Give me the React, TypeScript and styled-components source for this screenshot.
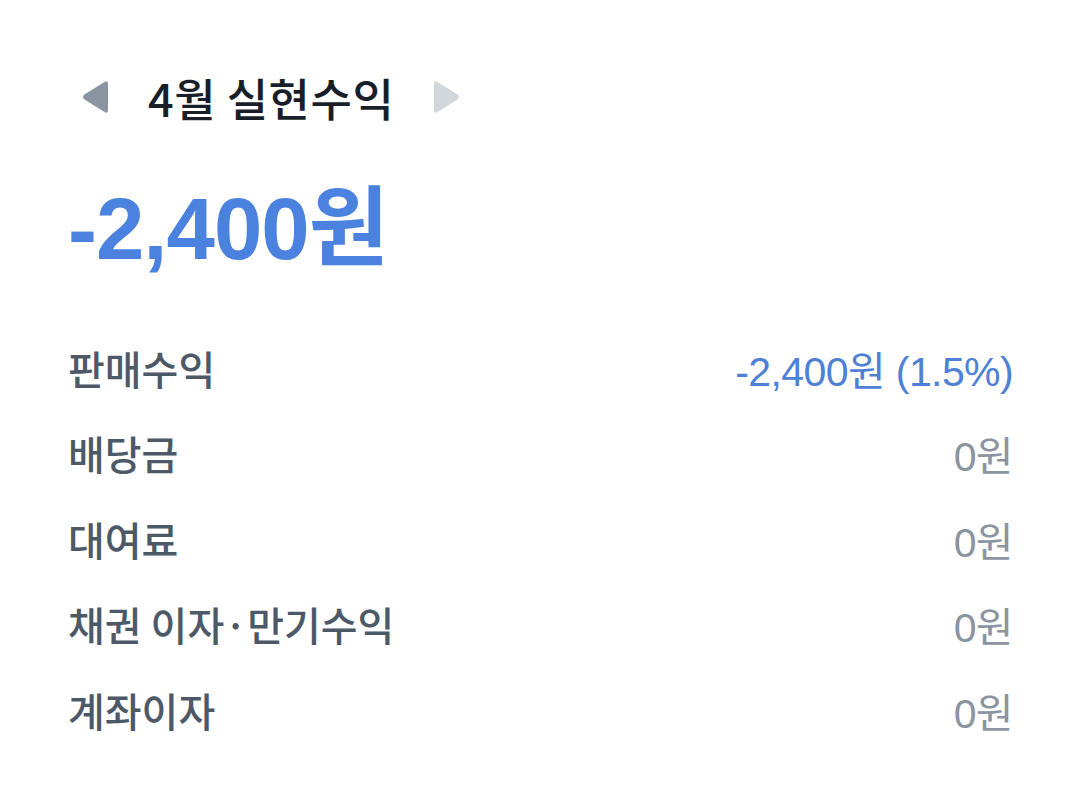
import React from 'react';
import styled, { createGlobalStyle } from 'styled-components';

const GlobalStyle = createGlobalStyle`
  body {
    margin: 0;
    background: #ffffff;
    font-family: "Liberation Sans", "Noto Sans CJK KR", sans-serif;
  }
`

const Page = styled.div`
  width: 1079px;
  height: 800px;
  box-sizing: border-box;
  padding: 62px 66px 0 68px;
  display: flex;
  flex-direction: column;
`

const MonthNav = styled.div`
  display: flex;
  align-items: center;
  height: 70px;
`

const ArrowButton = styled.button<{ enabled: boolean }>`
  border: 0;
  background: none;
  padding: 0;
  margin: 0 ${p => (p.enabled ? '38px' : '0')} 0 ${p => (p.enabled ? '12px' : '38px')};
  width: 30px;
  height: 34px;
  display: flex;
  align-items: center;
  justify-content: center;
  color: ${p => (p.enabled ? '#8b95a1' : '#d1d6db')};
`

const MonthTitle = styled.h2`
  margin: 0;
  font-family: "Noto Sans CJK KR", sans-serif;
  font-size: 45px;
  font-weight: 500;
  color: #191f28;
  letter-spacing: 0.5px;
`

const Amount = styled.div`
  margin-top: 53px;
  font-size: 87px;
  font-weight: 700;
  color: #4b82e0;
  line-height: 1;
  letter-spacing: -1px;
`

const List = styled.ul`
  list-style: none;
  margin: 53px 0 0 0;
  padding: 0;
  display: flex;
  flex-direction: column;
`

const Row = styled.li`
  display: flex;
  align-items: center;
  justify-content: space-between;
  height: 85.5px;
`

const Label = styled.span`
  font-family: "Noto Sans CJK KR", sans-serif;
  font-size: 40px;
  font-weight: 500;
  color: #4e5968;
`

const Value = styled.span<{ highlight?: boolean }>`
  font-size: 41px;
  color: ${p => (p.highlight ? '#4e80d6' : '#8b95a1')};
  letter-spacing: -0.6px;
`

function Triangle({ dir }: { dir: 'left' | 'right' }) {
  const d = dir === 'left'
    ? 'M28 4 L28 30 Q28 34 24.5 32 L4.5 19.5 Q1.5 17 4.5 14.5 L24.5 2 Q28 0 28 4 Z'
    : 'M2 4 L2 30 Q2 34 5.5 32 L25.5 19.5 Q28.5 17 25.5 14.5 L5.5 2 Q2 0 2 4 Z'
  return (
    <svg width="30" height="34" viewBox="0 0 30 34">
      <path d={d} fill="currentColor" />
    </svg>
  )
}

const items = [
  { label: '판매수익', value: '-2,400원 (1.5%)', highlight: true },
  { label: '배당금', value: '0원' },
  { label: '대여료', value: '0원' },
  { label: '채권 이자·만기수익', value: '0원' },
  { label: '계좌이자', value: '0원' },
]

export default function App() {
  return (
    <>
      <GlobalStyle />
      <Page>
        <MonthNav>
          <ArrowButton enabled aria-label="이전 달">
            <Triangle dir="left" />
          </ArrowButton>
          <MonthTitle>4월 실현수익</MonthTitle>
          <ArrowButton enabled={false} aria-label="다음 달">
            <Triangle dir="right" />
          </ArrowButton>
        </MonthNav>
        <Amount>-2,400원</Amount>
        <List>
          {items.map(item => (
            <Row key={item.label}>
              <Label>{item.label}</Label>
              <Value highlight={item.highlight}>{item.value}</Value>
            </Row>
          ))}
        </List>
      </Page>
    </>
  )
}
